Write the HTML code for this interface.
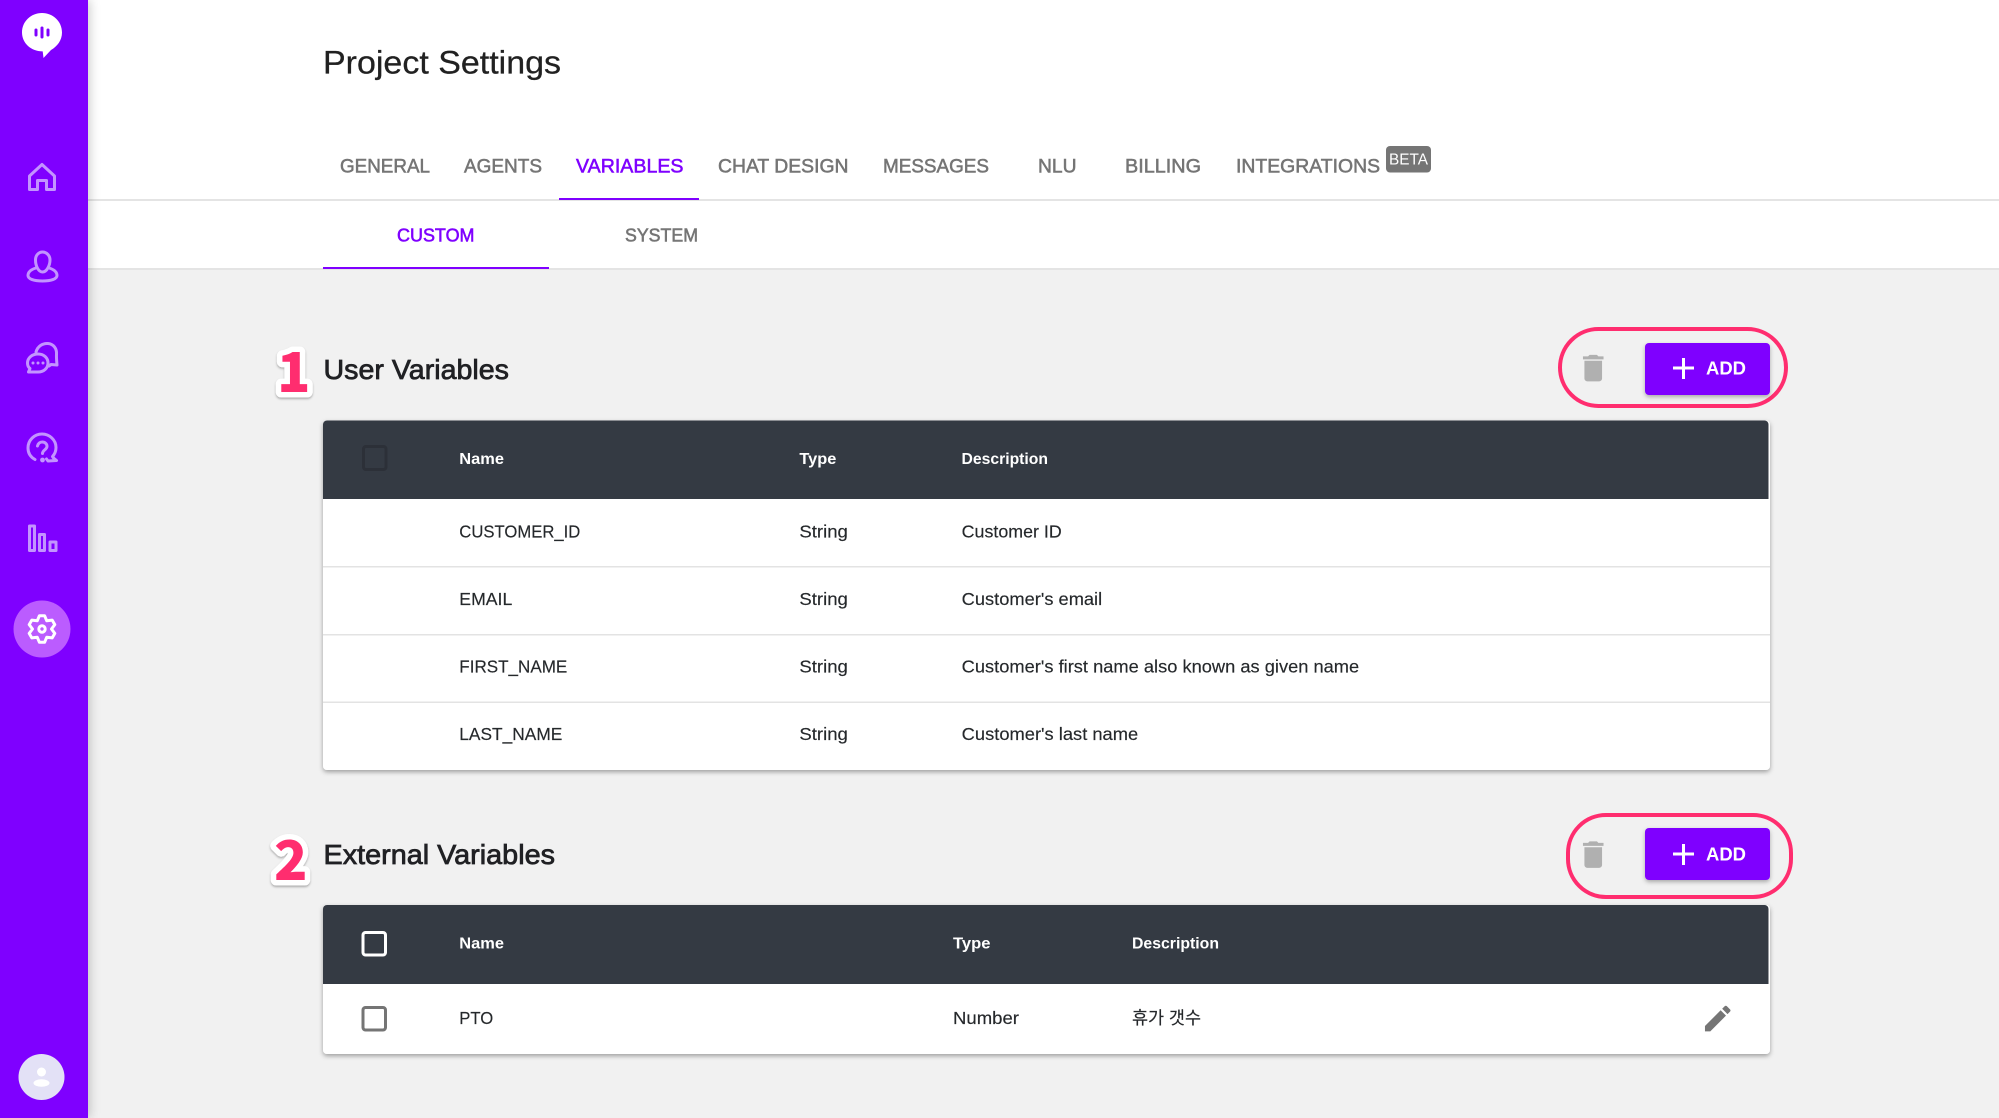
<!DOCTYPE html>
<html lang="en">
<head>
<meta charset="utf-8">
<title>Project Settings</title>
<style>
html,body{margin:0;padding:0;width:1999px;height:1118px;overflow:hidden;background:#f1f1f1}
svg{display:block;position:absolute;left:0;top:0}
text{font-family:"Liberation Sans","Noto Sans CJK KR",sans-serif;white-space:pre}
.tab{font-size:19.5px;fill:#757575;stroke:#757575;stroke-width:.55px}
.sub{font-size:18px;fill:#757575;stroke:#757575;stroke-width:.55px}
.on{fill:#7f00ff;stroke:#7f00ff}
.h2{font-size:28px;fill:#202124;stroke:#202124;stroke-width:.75px}
.th{font-size:16px;font-weight:700;fill:#fff}
.td{font-size:17.5px;fill:#25282b;stroke:#25282b;stroke-width:.15px}
.add{font-size:18.5px;font-weight:700;fill:#fff}
.num{font-family:"Noto Sans CJK KR","Liberation Sans",sans-serif;font-weight:900}
.ic{fill:none;stroke:#c394ff;stroke-width:3;stroke-linejoin:round;stroke-linecap:round}
.oval{fill:none;stroke:#ff2d6f;stroke-width:4}
.sep{fill:#e3e3e3}
</style>
</head>
<body>
<svg xmlns="http://www.w3.org/2000/svg" width="1999" height="1118" viewBox="0 0 1999 1118">
<defs>
<filter id="card" x="-3%" y="-8%" width="106%" height="116%"><feDropShadow dx="0" dy="2" stdDeviation="2.5" flood-color="#000" flood-opacity=".35"/></filter>
<filter id="btn" x="-10%" y="-20%" width="120%" height="150%"><feDropShadow dx="0" dy="2" stdDeviation="2" flood-color="#000" flood-opacity=".3"/></filter>
<filter id="num" x="-30%" y="-30%" width="160%" height="160%"><feDropShadow dx="0" dy="1.5" stdDeviation="1" flood-color="#000" flood-opacity=".3"/></filter>
<filter id="side" x="-30%" y="0" width="160%" height="100%"><feDropShadow dx="2" dy="0" stdDeviation="5" flood-color="#000" flood-opacity=".2"/></filter>
</defs>

<!-- background areas -->
<rect width="1999" height="1118" fill="#f1f1f1"/>
<rect width="1999" height="199" fill="#fff"/>
<rect y="199" width="1999" height="2" fill="#e4e4e4"/>
<rect y="201" width="1999" height="67" fill="#fff"/>
<rect y="268" width="1999" height="2" fill="#e4e4e4"/>

<!-- sidebar -->
<rect width="88" height="1118" fill="#7f00ff" filter="url(#side)"/>
<path d="M42 13c11 0 20 8.400 20 19.500 0 8-5 14-11 17.500l-7.500 8-.8-6.600C31 51.500 22 43 22 32.500 22 21.400 31 13 42 13z" fill="#fff"/>
<rect x="34.500" y="28.500" width="3" height="8" rx="1.500" fill="#7f00ff"/>
<rect x="40.500" y="26.500" width="3" height="12" rx="1.500" fill="#7f00ff"/>
<rect x="46.500" y="28.500" width="3" height="8" rx="1.500" fill="#7f00ff"/>

<path class="ic" d="M29.500 176L42 164.500 54.500 176V189.500H46.500V180.500H37.500V189.500H29.500Z"/>
<path class="ic" d="M35.500 260c0-4.500 3-8 7-8s7.500 3.500 7.500 8c0 5-3 12-7.500 12S35.500 265 35.500 260z"/>
<path class="ic" d="M36 268c-5 1.500-8 4-8 7.500 0 3.500 6 5.500 14.500 5.500S57 279 57 275.500c0-3.500-3-6-8-7.500"/>

<path class="ic" d="M36 352c1.500-5.500 6.500-9 12-8.500 5.500.5 9 5 8.500 11-.2 3 .2 7 .5 10.500l-6-.5-2 1.500"/>
<path class="ic" d="M38 354c6 0 10 4 10 9s-4 9-10 9h-9.500l1.500-3.500c-2-1.500-2.500-3.500-2.500-5.500 0-5 4.500-9 10.500-9z"/>
<circle cx="33" cy="363" r="1.500" fill="#c394ff"/><circle cx="38" cy="363" r="1.500" fill="#c394ff"/><circle cx="43" cy="363" r="1.500" fill="#c394ff"/>

<path class="ic" d="M35 459.500C30.500 457 28 453 28 448c0-8 6.500-14 14-14s14 6 14 13.500c0 3.500-1.200 6.500-3.500 9 .8 1.500 2.500 3 4 4l-8.500.5-1.500-2"/>
<path class="ic" stroke-width="3.400" d="M37.500 446c.5-2.500 2.500-4 4.800-4 2.600 0 4.700 1.800 4.700 4.200 0 3.500-4.500 3.800-4.500 7.300"/>
<circle cx="42.500" cy="460" r="2.400" fill="#c394ff"/>

<rect class="ic" x="29.500" y="526" width="5" height="24.500" stroke-width="2.800"/>
<rect class="ic" x="39.500" y="534.500" width="5" height="16" stroke-width="2.800"/>
<rect class="ic" x="50" y="542" width="6" height="8.500" stroke-width="2.800"/>

<circle cx="42" cy="629" r="28.500" fill="#bb5cff"/>
<g transform="translate(42 629)" fill="none" stroke="#fff" stroke-width="3" stroke-linejoin="round">
<path d="M-2.600-13.300L2.600-13.300 4.750-8.200 10.200-8.900 12.800-4.400 9.500 0 12.800 4.400 10.200 8.900 4.750 8.200 2.600 13.300-2.600 13.300-4.750 8.200-10.200 8.900-12.800 4.400-9.500 0-12.800-4.400-10.200-8.900-4.750-8.200Z"/>
<circle r="3.200"/>
</g>

<circle cx="41.500" cy="1077" r="23" fill="#e3e1f6"/>
<circle cx="41.500" cy="1072" r="4.500" fill="#fff"/>
<ellipse cx="41.500" cy="1083" rx="8" ry="3.800" fill="#fff"/>

<!-- header -->
<text x="323" y="73.500" font-size="32" fill="#212121" stroke="#212121" stroke-width=".25" textLength="238" lengthAdjust="spacingAndGlyphs">Project Settings</text>

<text class="tab" x="340" y="172.500" textLength="90" lengthAdjust="spacingAndGlyphs">GENERAL</text>
<text class="tab" x="464" y="172.500" textLength="78" lengthAdjust="spacingAndGlyphs">AGENTS</text>
<text class="tab on" x="576" y="172.500" textLength="107.500" lengthAdjust="spacingAndGlyphs">VARIABLES</text>
<text class="tab" x="718" y="172.500" textLength="130.500" lengthAdjust="spacingAndGlyphs">CHAT DESIGN</text>
<text class="tab" x="883" y="172.500" textLength="106" lengthAdjust="spacingAndGlyphs">MESSAGES</text>
<text class="tab" x="1038" y="172.500" textLength="38.500" lengthAdjust="spacingAndGlyphs">NLU</text>
<text class="tab" x="1125" y="172.500" textLength="76" lengthAdjust="spacingAndGlyphs">BILLING</text>
<text class="tab" x="1236" y="172.500" textLength="144" lengthAdjust="spacingAndGlyphs">INTEGRATIONS</text>
<rect x="1386" y="146" width="45" height="26.500" rx="4" fill="#757575"/>
<text x="1389" y="164.500" font-size="16" fill="#fff" textLength="39" lengthAdjust="spacingAndGlyphs">BETA</text>
<rect x="559" y="198" width="140" height="2" fill="#7f00ff"/>

<text class="sub on" x="397" y="241.500" textLength="77.500" lengthAdjust="spacingAndGlyphs">CUSTOM</text>
<text class="sub" x="625" y="241.500" textLength="73" lengthAdjust="spacingAndGlyphs">SYSTEM</text>
<rect x="323" y="267" width="226" height="2" fill="#7f00ff"/>

<!-- section 1 -->
<text class="num" x="277" y="392" font-size="55" fill="#fff" stroke="#fff" stroke-width="11" stroke-linejoin="round" filter="url(#num)">1</text>
<text class="num" x="277" y="392" font-size="55" fill="#ff2d6f">1</text>
<text class="h2" x="323.500" y="379" textLength="185.500" lengthAdjust="spacingAndGlyphs">User Variables</text>

<rect class="oval" x="1560" y="329" width="226" height="77" rx="38.500"/>
<path transform="translate(1575.600 350.500) scale(1.470)" d="M6 19c0 1.100.9 2 2 2h8c1.100 0 2-.9 2-2V7H6v12zM19 4h-3.500l-1-1h-5l-1 1H5v2h14V4z" fill="#b0b0b0"/>
<rect x="1645" y="343" width="125" height="52" rx="4" fill="#7f00ff" filter="url(#btn)"/>
<rect x="1673" y="366.500" width="21" height="3" fill="#fff"/><rect x="1682" y="358" width="3" height="21" fill="#fff"/>
<text class="add" x="1706" y="374.500" textLength="40" lengthAdjust="spacingAndGlyphs">ADD</text>

<rect x="323" y="420.500" width="1447" height="349.500" rx="4" fill="#fff" filter="url(#card)"/>
<path d="M323 499V424.500a4 4 0 0 1 4-4H1764.500a4 4 0 0 1 4 4V499Z" fill="#343a43"/>
<rect x="363.500" y="446.500" width="22.500" height="23" rx="2.500" fill="none" stroke="#2c3038" stroke-width="3"/>
<text class="th" x="459.300" y="464" textLength="44.700" lengthAdjust="spacingAndGlyphs">Name</text>
<text class="th" x="799.400" y="464" textLength="37" lengthAdjust="spacingAndGlyphs">Type</text>
<text class="th" x="961.500" y="464" textLength="86.500" lengthAdjust="spacingAndGlyphs">Description</text>

<rect class="sep" x="323" y="566" width="1447" height="1.500"/>
<rect class="sep" x="323" y="634" width="1447" height="1.500"/>
<rect class="sep" x="323" y="701.500" width="1447" height="1.500"/>

<text class="td" x="459.300" y="537.700" textLength="121" lengthAdjust="spacingAndGlyphs">CUSTOMER_ID</text>
<text class="td" x="799.400" y="537.700" textLength="48.500" lengthAdjust="spacingAndGlyphs">String</text>
<text class="td" x="961.700" y="537.700" textLength="100" lengthAdjust="spacingAndGlyphs">Customer ID</text>
<text class="td" x="459.300" y="605" textLength="53" lengthAdjust="spacingAndGlyphs">EMAIL</text>
<text class="td" x="799.400" y="605" textLength="48.500" lengthAdjust="spacingAndGlyphs">String</text>
<text class="td" x="961.700" y="605" textLength="140.500" lengthAdjust="spacingAndGlyphs">Customer's email</text>
<text class="td" x="459.300" y="672.700" textLength="108" lengthAdjust="spacingAndGlyphs">FIRST_NAME</text>
<text class="td" x="799.400" y="672.700" textLength="48.500" lengthAdjust="spacingAndGlyphs">String</text>
<text class="td" x="961.700" y="672.700" textLength="397.500" lengthAdjust="spacingAndGlyphs">Customer's first name also known as given name</text>
<text class="td" x="459.300" y="740" textLength="103" lengthAdjust="spacingAndGlyphs">LAST_NAME</text>
<text class="td" x="799.400" y="740" textLength="48.500" lengthAdjust="spacingAndGlyphs">String</text>
<text class="td" x="961.700" y="740" textLength="176.500" lengthAdjust="spacingAndGlyphs">Customer's last name</text>

<!-- section 2 -->
<text class="num" x="274" y="880" font-size="55" fill="#fff" stroke="#fff" stroke-width="11" stroke-linejoin="round" filter="url(#num)">2</text>
<text class="num" x="274" y="880" font-size="55" fill="#ff2d6f">2</text>
<text class="h2" x="323.500" y="864" textLength="231.500" lengthAdjust="spacingAndGlyphs">External Variables</text>

<rect class="oval" x="1568" y="815" width="223" height="82" rx="38"/>
<path transform="translate(1575.600 837) scale(1.470)" d="M6 19c0 1.100.9 2 2 2h8c1.100 0 2-.9 2-2V7H6v12zM19 4h-3.500l-1-1h-5l-1 1H5v2h14V4z" fill="#b0b0b0"/>
<rect x="1645" y="828" width="125" height="52" rx="4" fill="#7f00ff" filter="url(#btn)"/>
<rect x="1673" y="852.500" width="21" height="3" fill="#fff"/><rect x="1682" y="844" width="3" height="21" fill="#fff"/>
<text class="add" x="1706" y="860.700" textLength="40" lengthAdjust="spacingAndGlyphs">ADD</text>

<rect x="323" y="905" width="1447" height="149" rx="4" fill="#fff" filter="url(#card)"/>
<path d="M323 984V909a4 4 0 0 1 4-4H1764.500a4 4 0 0 1 4 4V984Z" fill="#343a43"/>
<rect x="363" y="932.500" width="22.500" height="22.500" rx="2.500" fill="none" stroke="#fff" stroke-width="3"/>
<text class="th" x="459.300" y="948.500" textLength="44.700" lengthAdjust="spacingAndGlyphs">Name</text>
<text class="th" x="953" y="948.500" textLength="37.500" lengthAdjust="spacingAndGlyphs">Type</text>
<text class="th" x="1132" y="948.500" textLength="87" lengthAdjust="spacingAndGlyphs">Description</text>

<rect x="363" y="1007.500" width="22.500" height="22.500" rx="2.500" fill="none" stroke="#757575" stroke-width="3"/>
<text class="td" x="459.300" y="1024" textLength="34" lengthAdjust="spacingAndGlyphs">PTO</text>
<text class="td" x="953" y="1024" textLength="66" lengthAdjust="spacingAndGlyphs">Number</text>
<text class="td" x="1132" y="1024" textLength="69" lengthAdjust="spacingAndGlyphs">휴가 갯수</text>
<path transform="translate(1700.700 1001.500) scale(1.420)" d="M3 17.250V21h3.750L17.810 9.940l-3.750-3.750L3 17.250zM20.710 7.040c.39-.39.39-1.020 0-1.410l-2.340-2.340c-.39-.39-1.020-.39-1.410 0l-1.830 1.830 3.750 3.750 1.830-1.830z" fill="#757575"/>
</svg>
</body>
</html>
